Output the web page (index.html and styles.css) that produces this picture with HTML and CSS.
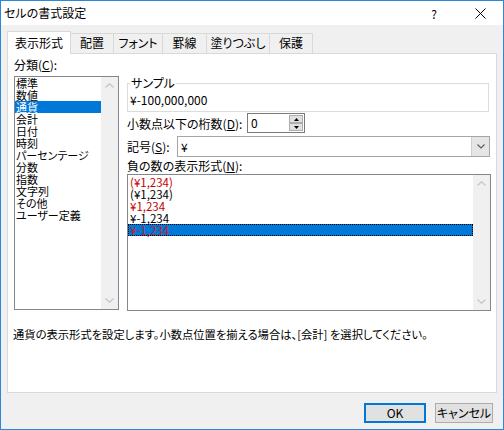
FILE: index.html
```html
<!DOCTYPE html>
<html lang="ja">
<head>
<meta charset="utf-8">
<title>セルの書式設定</title>
<link rel="stylesheet" href="styles.css">
</head>
<body>
<div class="window">
  <div class="titlebar">
    <span class="title">セルの書式設定</span>
    <span class="help">?</span>
    <span class="close"><svg width="11" height="11" viewBox="0 0 11 11"><path d="M0.5 0.5L10.5 10.5M10.5 0.5L0.5 10.5" stroke="#000" stroke-width="1" fill="none"/></svg></span>
  </div>
  <div class="body">
    <div class="tabs">
      <div class="tab t1 active">表示形式</div>
      <div class="tab t2">配置</div>
      <div class="tab t3">フォント</div>
      <div class="tab t4">罫線</div>
      <div class="tab t5">塗りつぶし</div>
      <div class="tab t6">保護</div>
    </div>
    <div class="panel">
      <div class="columns">
        <div class="leftcol">
          <div class="label">分類(<u>C</u>):</div>
          <div class="listbox cat">
            <ul class="items">
              <li>標準</li>
              <li>数値</li>
              <li class="sel">通貨</li>
              <li>会計</li>
              <li>日付</li>
              <li>時刻</li>
              <li>パーセンテージ</li>
              <li>分数</li>
              <li>指数</li>
              <li>文字列</li>
              <li>その他</li>
              <li>ユーザー定義</li>
            </ul>
            <div class="vscroll">
              <div class="arrow"><svg width="9" height="5" viewBox="0 0 9 5"><polyline points="0.5,4.5 4.5,0.8 8.5,4.5" fill="none" stroke="#c4c4c4" stroke-width="1.2"/></svg></div>
              <div class="arrow"><svg width="9" height="5" viewBox="0 0 9 5"><polyline points="0.5,0.5 4.5,4.2 8.5,0.5" fill="none" stroke="#c4c4c4" stroke-width="1.2"/></svg></div>
            </div>
          </div>
        </div>
        <div class="rightcol">
          <fieldset class="sample">
            <legend>サンプル</legend>
            <div class="sample-value">¥-100,000,000</div>
          </fieldset>
          <div class="row spin-row">
            <span class="lbl">小数点以下の桁数(<u>D</u>):</span>
            <div class="spin">
              <span class="spin-val">0</span>
              <div class="spin-btns">
                <div class="sb"><svg width="5" height="3" viewBox="0 0 5 3"><polygon points="0,3 2.5,0 5,3" fill="#000"/></svg></div>
                <div class="sb"><svg width="5" height="3" viewBox="0 0 5 3"><polygon points="0,0 2.5,3 5,0" fill="#000"/></svg></div>
              </div>
            </div>
          </div>
          <div class="row combo-row">
            <span class="lbl lbl-s">記号(<u>S</u>):</span>
            <div class="combo">
              <span class="combo-val">¥</span>
              <div class="combo-btn"><svg width="8" height="5" viewBox="0 0 8 5"><polyline points="0.5,0.5 4,4 7.5,0.5" fill="none" stroke="#5a5a5a" stroke-width="1.1"/></svg></div>
            </div>
          </div>
          <div class="label neg-label">負の数の表示形式(<u>N</u>):</div>
          <div class="listbox neg">
            <ul class="items">
              <li class="red">(¥1,234)</li>
              <li>(¥1,234)</li>
              <li class="red">¥1,234</li>
              <li>¥-1,234</li>
              <li class="red sel">¥-1,234</li>
            </ul>
            <div class="vscroll">
              <div class="arrow"><svg width="9" height="5" viewBox="0 0 9 5"><polyline points="0.5,4.5 4.5,0.8 8.5,4.5" fill="none" stroke="#c4c4c4" stroke-width="1.2"/></svg></div>
              <div class="arrow"><svg width="9" height="5" viewBox="0 0 9 5"><polyline points="0.5,0.5 4.5,4.2 8.5,0.5" fill="none" stroke="#c4c4c4" stroke-width="1.2"/></svg></div>
            </div>
          </div>
        </div>
      </div>
      <p class="desc">通貨の表示形式を設定します。小数点位置を揃える場合は、[会計] を選択してください。</p>
    </div>
    <div class="buttons">
      <button class="btn ok">OK</button>
      <button class="btn cancel">キャンセル</button>
    </div>
  </div>
</div>
</body>
</html>
```
FILE: styles.css
```css
html, body {
  margin: 0;
  padding: 0;
}
body {
  width: 504px;
  height: 430px;
  overflow: hidden;
  font-family: "Noto Sans CJK JP", "Noto Sans", sans-serif;
  font-size: 12px;
  font-feature-settings: "palt";
  color: #000;
}
.window {
  box-sizing: border-box;
  width: 504px;
  height: 430px;
  border: 1px solid #2b88d8;
  background: #f0f0f0;
  display: flex;
  flex-direction: column;
}
.titlebar {
  height: 24px;
  background: #fff;
  display: flex;
  align-items: center;
  padding-left: 3px;
}
.title {
  flex: 1;
  line-height: 16px;
}
.help, .close {
  width: 46px;
  display: flex;
  align-items: center;
  justify-content: center;
  height: 24px;
}
.body {
  flex: 1;
  padding: 6px 6px 0 6px;
  display: flex;
  flex-direction: column;
}
.tabs {
  display: flex;
  align-items: flex-end;
  height: 22px;
}
.tab {
  box-sizing: border-box;
  height: 20px;
  border: 1px solid #d9d9d9;
  border-bottom: none;
  margin-right: -1px;
  background: #f0f0f0;
  text-align: center;
  line-height: 18px;
}
.tab.active {
  height: 23px;
  margin-bottom: -1px;
  background: #fff;
  position: relative;
  z-index: 1;
  line-height: 21px;
}
.t1 { width: 64px; }
.t2 { width: 44px; }
.t3 { width: 50px; }
.t4 { width: 45px; }
.t5 { width: 64px; }
.t6 { width: 44px; }
.panel {
  box-sizing: border-box;
  width: 490px;
  height: 340px;
  background: #fff;
  border: 1px solid #d9d9d9;
  padding: 3px 5px 0 6px;
}
.columns {
  display: flex;
  gap: 8px;
}
.leftcol {
  width: 105px;
}
.label {
  line-height: 16px;
  height: 16px;
  white-space: nowrap;
}
.leftcol .label {
  margin-bottom: 3px;
}
.listbox {
  box-sizing: border-box;
  border: 1px solid #828790;
  background: #fff;
  display: flex;
}
.cat {
  height: 234px;
}
.items {
  flex: 1;
  list-style: none;
  margin: 0;
  padding: 0;
}
.items li {
  height: 12px;
  line-height: 12px;
  padding-left: 1px;
  white-space: nowrap;
  font-size: 11px;
}
.cat .items li.sel {
  background: #0078d7;
  color: #fff;
}
.vscroll {
  width: 17px;
  background: #f0f0f0;
  display: flex;
  flex-direction: column;
  justify-content: space-between;
}
.arrow {
  height: 17px;
  display: flex;
  align-items: center;
  justify-content: center;
}
.rightcol {
  width: 364px;
  display: flex;
  flex-direction: column;
}
.sample {
  box-sizing: border-box;
  width: 362px;
  margin: 19px 0 0 0;
  border: 1px solid #dcdcdc;
  padding: 3px 2px 4px 2px;
}
.sample legend {
  padding: 0 1px;
  line-height: 14px;
}
.sample-value {
  line-height: 14px;
}
.row {
  display: flex;
  align-items: center;
}
.spin-row {
  height: 20px;
  margin-top: 1px;
}
.lbl {
  width: 120px;
  white-space: nowrap;
}
.lbl-s {
  width: 50px;
}
.spin {
  box-sizing: border-box;
  width: 58px;
  height: 20px;
  border: 1px solid #7a7a7a;
  display: flex;
  background: #fff;
}
.spin-val {
  flex: 1;
  padding-left: 3px;
  line-height: 18px;
}
.spin-btns {
  width: 16px;
  display: flex;
  flex-direction: column;
  padding: 1px;
  box-sizing: border-box;
}
.sb {
  flex: 1;
  background: #e1e1e1;
  border: 1px solid #adadad;
  display: flex;
  align-items: center;
  justify-content: center;
}
.combo-row {
  height: 21px;
  margin-top: 3px;
}
.combo {
  box-sizing: border-box;
  width: 313px;
  height: 21px;
  border: 1px solid #a6a6a6;
  display: flex;
  background: #fff;
}
.combo-val {
  flex: 1;
  padding-left: 3px;
  line-height: 19px;
}
.combo-btn {
  width: 17px;
  background: #e5e5e5;
  border-left: 1px solid #cfcfcf;
  display: flex;
  align-items: center;
  justify-content: center;
}
.neg-label {
  margin-top: 2px;
  line-height: 14px;
  height: 14px;
}
.neg {
  height: 137px;
  width: 364px;
  margin-top: 1px;
}
.neg .items {
  padding-top: 1px;
}
.neg .items li {
  padding-left: 2px;
  font-size: 11.5px;
}
.red {
  color: #c80000;
}
.neg .items li.sel {
  background: #0078d7;
  color: #c0202a;
  outline: 1px dotted #000;
  outline-offset: -1px;
}
.desc {
  margin: 16px 0 0 -1px;
  line-height: 14px;
  white-space: nowrap;
  font-size: 11.3px;
}
.buttons {
  display: flex;
  justify-content: flex-end;
  gap: 9px;
  margin-top: 10px;
  padding-right: 4px;
}
.btn {
  box-sizing: border-box;
  height: 20px;
  font: inherit;
  font-feature-settings: "palt";
  color: #000;
  background: #e1e1e1;
  border: 1px solid #adadad;
  padding: 0;
  line-height: 16px;
}
.ok {
  width: 62px;
  border: 2px solid #0078d7;
}
.cancel {
  width: 58px;
}
```
